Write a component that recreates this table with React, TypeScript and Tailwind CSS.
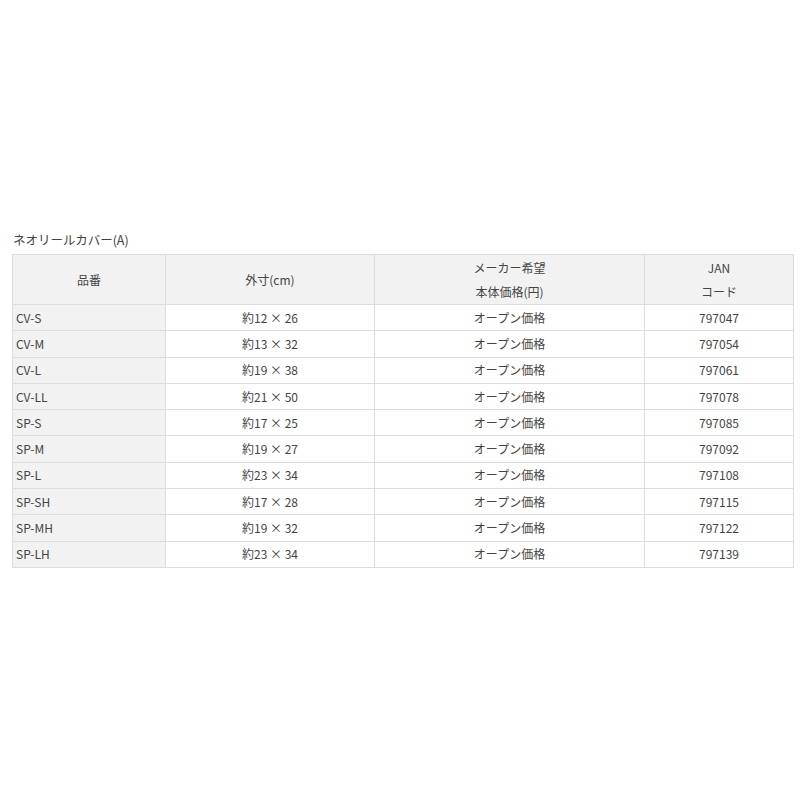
const rows: [string, string, string][] = [
  ['CV-S', '約12 × 26', '797047'],
  ['CV-M', '約13 × 32', '797054'],
  ['CV-L', '約19 × 38', '797061'],
  ['CV-LL', '約21 × 50', '797078'],
  ['SP-S', '約17 × 25', '797085'],
  ['SP-M', '約19 × 27', '797092'],
  ['SP-L', '約23 × 34', '797108'],
  ['SP-SH', '約17 × 28', '797115'],
  ['SP-MH', '約19 × 32', '797122'],
  ['SP-LH', '約23 × 34', '797139'],
];

const App = () => {
  return (
    <div
      className="w-[800px] h-[800px] bg-white text-[#444] pt-[230px] pl-[12px]"
      style={{ fontFamily: '"Noto Sans CJK JP", "Noto Sans", sans-serif' }}
    >
      {/* Title */}
      <div className="h-[20px] leading-[20px] text-[12.5px] mb-[4px] pl-[1px]">ネオリールカバー(A)</div>

      {/* Table */}
      <table className="w-[781px] border-collapse text-[12px] table-fixed">
        <colgroup>
          <col className="w-[153px]" />
          <col className="w-[209px]" />
          <col className="w-[270px]" />
          <col className="w-[149px]" />
        </colgroup>
        <thead>
          <tr className="bg-[#f2f2f2] h-[50px]">
            <th className="border border-[#dddddd] font-normal text-center leading-[24px]">品番</th>
            <th className="border border-[#dddddd] font-normal text-center leading-[24px]">外寸(cm)</th>
            <th className="border border-[#dddddd] font-normal text-center leading-[24px]">
              メーカー希望
              <br />
              本体価格(円)
            </th>
            <th className="border border-[#dddddd] font-normal text-center leading-[24px]">
              JAN
              <br />
              コード
            </th>
          </tr>
        </thead>
        <tbody>
          {rows.map(([code, size, jan]) => (
            <tr key={code} className="h-[26.3px]">
              <td className="border border-[#dddddd] bg-[#f2f2f2] pl-[3px] leading-[24px]">{code}</td>
              <td className="border border-[#dddddd] text-center leading-[24px]">{size}</td>
              <td className="border border-[#dddddd] text-center leading-[24px]">オープン価格</td>
              <td className="border border-[#dddddd] text-center leading-[24px]">{jan}</td>
            </tr>
          ))}
        </tbody>
      </table>
    </div>
  );
};

export default App;
